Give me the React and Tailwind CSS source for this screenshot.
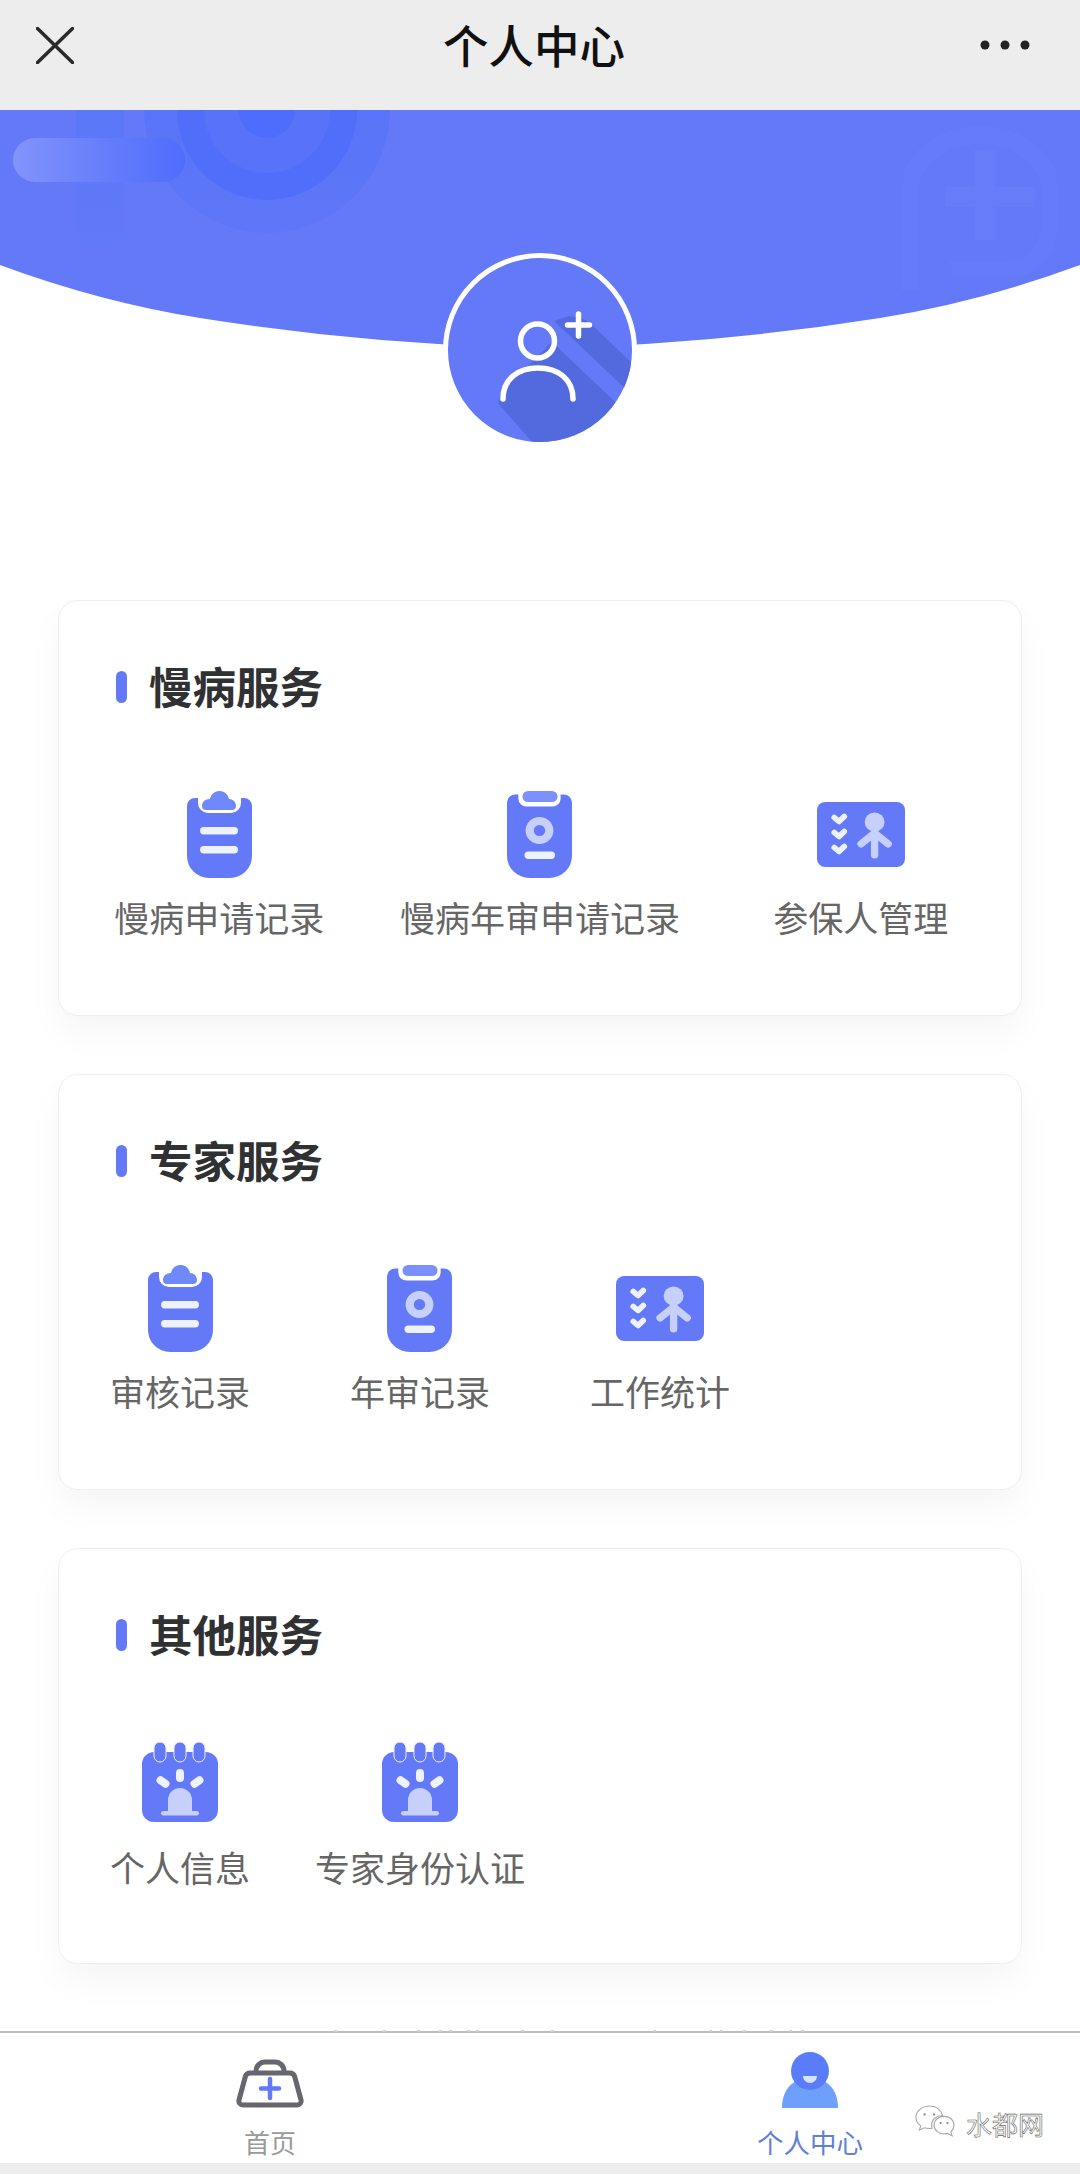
import React from 'react';

const BLUE = '#6479f8';
const PALE = '#c6d0fb';
const LIGHT = '#eef1fe';

// bottoms of the page text that sticks out just above the tab bar line
const CLIPPED_TICKS = [334, 383, 417, 439, 449, 467, 476, 521, 551, 653, 709, 720, 743, 770, 789, 801];

function ClipCloudIcon() {
  return (
    <svg width="65" height="87" viewBox="0 0 65 87">
      <path d="M8 7h3v5a10 10 0 0 0 10 10h23a10 10 0 0 0 10-10V7h3a8 8 0 0 1 8 8v50a22 22 0 0 1-22 22H22A22 22 0 0 1 0 65V15a8 8 0 0 1 8-8z" fill={BLUE} />
      <path d="M19 19a4 4 0 0 1-4-4c0-4 3-7 8-7 1-5 5-8 9.500-8s8.500 3 9.500 8c4 0 7 3 7 7a4 4 0 0 1-4 4z" fill="#6f88fa" />
      <rect x="13" y="36" width="38" height="7.500" rx="3.700" fill={LIGHT} />
      <rect x="13" y="55" width="38" height="7.500" rx="3.700" fill={LIGHT} />
    </svg>
  );
}

function ClipBadgeIcon() {
  return (
    <svg width="66" height="87" viewBox="0 0 64 87" preserveAspectRatio="none">
      <path d="M8 3.500h3v4a8 8 0 0 0 8 8h25a8 8 0 0 0 8-8v-4h3a8 8 0 0 1 8 8V65a22 22 0 0 1-22 22H22A22 22 0 0 1 0 65V11.500a8 8 0 0 1 8-8z" fill={BLUE} />
      <rect x="15" y="0" width="34" height="11" rx="5.500" fill="#7a91fb" />
      <circle cx="31.500" cy="39.500" r="9.500" fill="none" stroke={PALE} strokeWidth="8" />
      <rect x="17" y="60.500" width="29.500" height="7.500" rx="3.700" fill={LIGHT} />
    </svg>
  );
}

function PersonListIcon() {
  return (
    <svg width="88" height="65" viewBox="0 0 84 65" preserveAspectRatio="none">
      <rect width="84" height="65" rx="8" fill={BLUE} />
      <g fill="none" stroke={LIGHT} strokeWidth="5.500" strokeLinecap="round" strokeLinejoin="round">
        <path d="M16.500 15.500l4.500 4 5-5" />
        <path d="M16.500 30.500l4.500 4 5-5" />
        <path d="M16.500 45.500l4.500 4 5-5" />
      </g>
      <circle cx="55" cy="20" r="9.500" fill={PALE} />
      <g fill="none" stroke={PALE} strokeWidth="7" strokeLinecap="round">
        <path d="M55 24v29" />
        <path d="M55 31L42 42" />
        <path d="M55 31l13 11" />
      </g>
    </svg>
  );
}

function AlarmCalendarIcon() {
  return (
    <svg width="76" height="80" viewBox="0 0 76 80">
      <rect y="10" width="76" height="70" rx="12" fill={BLUE} />
      {[18, 38, 57].map(cx => (
        <rect key={cx} x={cx - 6} y="0" width="12" height="20" rx="6" fill={BLUE} stroke="#eef1fe" strokeWidth="1" />
      ))}
      <rect x="34" y="27" width="8" height="13" rx="4" fill={LIGHT} />
      <rect x="17" y="33" width="8" height="14" rx="4" fill={LIGHT} transform="rotate(-55 21 40)" />
      <rect x="51" y="33" width="8" height="14" rx="4" fill={LIGHT} transform="rotate(55 55 40)" />
      <path d="M26 70V58a12 12 0 0 1 24 0v12z" fill={PALE} />
      <rect x="19" y="69" width="38" height="4.500" rx="2.200" fill={PALE} />
    </svg>
  );
}

const sections = [
  {
    title: '慢病服务',
    itemWidth: 'w-[321px]',
    shift: 'ml-0',
    labelGap: 'mt-[15px]',
    items: [
      { icon: <ClipCloudIcon />, label: '慢病申请记录' },
      { icon: <ClipBadgeIcon />, label: '慢病年审申请记录' },
      { icon: <PersonListIcon />, label: '参保人管理' },
    ],
  },
  {
    title: '专家服务',
    itemWidth: 'w-[240px]',
    shift: 'ml-[1px]',
    labelGap: 'mt-[15px]',
    items: [
      { icon: <ClipCloudIcon />, label: '审核记录' },
      { icon: <ClipBadgeIcon />, label: '年审记录' },
      { icon: <PersonListIcon />, label: '工作统计' },
    ],
  },
  {
    title: '其他服务',
    itemWidth: 'w-[240px]',
    shift: 'ml-[1px]',
    labelGap: 'mt-[17px]',
    items: [
      { icon: <AlarmCalendarIcon />, label: '个人信息' },
      { icon: <AlarmCalendarIcon />, label: '专家身份认证' },
    ],
  },
];

function ServiceCard({ section }) {
  return (
    <section className="h-[416px] rounded-[20px] border border-[#efefef] bg-white pt-[63px] shadow-[0_18px_36px_rgba(0,0,0,0.04)]">
      <div className="flex h-[44px] items-center pl-[57px]">
        <span className="mt-[2px] h-[32px] w-[11px] rounded-full bg-[#6479f8]" />
        <h2 className="ml-[22px] text-[43.500px] font-bold leading-[44px] text-[#303133]">{section.title}</h2>
      </div>
      <div className={`mt-[82px] flex ${section.shift}`}>
        {section.items.map(item => (
          <div key={item.label} className={`flex flex-col items-center ${section.itemWidth}`}>
            <div className="flex h-[88px] items-center justify-center">{item.icon}</div>
            <span className={`${section.labelGap} whitespace-nowrap text-[35px] leading-[48px] text-[#666666]`}>{item.label}</span>
          </div>
        ))}
      </div>
    </section>
  );
}

function Hero() {
  return (
    <div className="relative h-[490px] bg-white">
      <svg className="absolute left-0 top-0" width="1080" height="260" viewBox="0 110 1080 260">
        <defs>
          <clipPath id="heroClip">
            <path d="M0 265Q100 302 200 318Q370 345 540 348Q710 345 880 318Q980 302 1080 265V110H0z" />
          </clipPath>
          <linearGradient id="barGrad" x1="0" x2="1" y1="0" y2="0">
            <stop offset="0" stopColor="#8293fb" />
            <stop offset="0.5" stopColor="#677ffb" />
            <stop offset="1" stopColor="#4f6dfd" />
          </linearGradient>
          <linearGradient id="stemGrad" x1="0" x2="0" y1="0" y2="1">
            <stop offset="0" stopColor="#5b78f9" />
            <stop offset="1" stopColor="#6279f8" />
          </linearGradient>
          <linearGradient id="discGrad" x1="0" x2="0" y1="0" y2="1">
            <stop offset="0" stopColor="#5571f9" />
            <stop offset="1" stopColor="#5e77f8" />
          </linearGradient>
        </defs>
        <g clipPath="url(#heroClip)">
          <rect x="0" y="110" width="1080" height="260" fill={BLUE} />
          <circle cx="267" cy="110" r="123" fill="url(#discGrad)" />
          <circle cx="267" cy="110" r="90" fill="#516efb" />
          <circle cx="267" cy="110" r="63" fill="#5873f9" />
          <circle cx="267" cy="110" r="28" fill="#4f6dfc" />
          <rect x="76" y="110" width="48" height="136" fill="url(#stemGrad)" />
          <rect x="13" y="138" width="172" height="44" rx="22" fill="url(#barGrad)" />
          <path d="M910 290V190a70 55 0 0 1 140 0v30q0 50-50 50h-50" fill="none" stroke="#667bf9" strokeWidth="18" />
          <path d="M975 150h20v37h40v20h-40v33h-20v-33h-30v-20h30z" fill="#677cf9" />
        </g>
      </svg>
      <div className="relative flex justify-center pt-[143px]">
        <div className="h-[194px] w-[194px] rounded-full border-[5px] border-white bg-[#6479f8]">
          <svg className="block" width="184" height="184" viewBox="0 0 184 184">
            <defs>
              <clipPath id="avatarClip">
                <circle cx="92" cy="92" r="92" />
              </clipPath>
            </defs>
            <g clipPath="url(#avatarClip)">
              <path d="M141 64l48 46-5 27-78-74 15-5 12 2z" fill="#5369de" />
              <path d="M104 84l80 76-30 24H84L50 145l6-14 26-25 22-22z" fill="#5369de" />
            </g>
            <g fill="none" stroke="#ffffff" strokeWidth="5.500" strokeLinecap="round">
              <circle cx="89.500" cy="83" r="17" />
              <path d="M55 141c0-20 15-31 35-31s35 11 35 31" />
              <path d="M130.500 56v22M119.500 67h22" />
            </g>
          </svg>
        </div>
      </div>
    </div>
  );
}

function TabBar() {
  return (
    <footer className="relative bg-white">
      <svg className="absolute -top-[1px] left-0" width="1080" height="2" viewBox="0 0 1080 2" fill="#d0d0d0">
        {CLIPPED_TICKS.map(x => <rect key={x} x={x} y="0" width="3" height="2" />)}
      </svg>
      <div className="h-[2px] bg-[#bdbdbd]" />
      <div className="flex h-[130px]">
        <div className="flex w-[540px] flex-col items-center pt-[25px]">
          <svg width="68" height="50" viewBox="0 0 68 50">
            <path d="M20 16v-3a9 9 0 0 1 9-9h10a9 9 0 0 1 9 9v3" fill="none" stroke="#66666e" strokeWidth="5" />
            <path d="M14 15h40a5 5 0 0 1 4.500 3l6.500 24a4 4 0 0 1-4 5H7a4 4 0 0 1-4-5l6.500-24a5 5 0 0 1 4.500-3z" fill="#ffffff" stroke="#66666e" strokeWidth="5" strokeLinejoin="round" />
            <path d="M34 21v19M25 30.500h18" fill="none" stroke="#6479f8" strokeWidth="4.500" strokeLinecap="round" />
          </svg>
          <span className="mt-[16px] text-[26px] leading-[36px] text-[#999999]">首页</span>
        </div>
        <div className="flex w-[540px] flex-col items-center pt-[19px]">
          <svg width="58" height="56" viewBox="0 0 58 56">
            <path d="M1 56c0-20 12-30 28-30s28 10 28 30z" fill="#6ea0fb" />
            <circle cx="29" cy="19" r="19" fill="#5b7cf9" />
            <path d="M22 24h14a7 7 0 0 1-14 0z" fill="#d5e4fd" />
          </svg>
          <span className="mt-[16px] text-[26.500px] leading-[36px] text-[#5f80d8]">个人中心</span>
        </div>
      </div>
      <div className="absolute left-[914px] top-[74px] flex items-center gap-[10px]">
        <svg width="42" height="38" viewBox="0 0 42 40" fill="#ffffff" stroke="#a8a8a8" strokeWidth="1.200">
          <path d="M15 1C7 1 1 6.500 1 13c0 4 2 7 5 9l-1.500 4.500 5-2.500c1.500.5 3 .7 5.500.7 1 0 2 0 3-.2-.5-1.500-.5-2.500-.5-3.500 0-6 5.500-10 11.500-10C27 5 22 1 15 1z" />
          <path d="M41 21c0-5.500-5-9-10.500-9S20 15.500 20 21s5 9.500 10.500 9.500c1.500 0 2.500-.2 4-.6l4.500 2.600-1.300-4C40 26 41 24 41 21z" />
          <circle cx="10" cy="10" r="1.200" fill="#888888" stroke="none" />
          <circle cx="20" cy="10" r="1.200" fill="#888888" stroke="none" />
          <circle cx="27" cy="19" r="1.200" fill="#888888" stroke="none" />
          <circle cx="34" cy="19" r="1.200" fill="#888888" stroke="none" />
        </svg>
        <span className="text-[26px] font-normal leading-[36px] text-white [-webkit-text-stroke:0.6px_#666666]">水都网</span>
      </div>
    </footer>
  );
}

export default function App() {
  return (
    <div className="flex h-[2174px] w-[1080px] flex-col overflow-hidden bg-white font-['Noto_Sans_CJK_SC','Noto_Sans',sans-serif]">
      <header className="flex h-[110px] shrink-0 items-start justify-between bg-[#ededed] px-[36px] pt-[27px]">
        <svg width="38" height="37" viewBox="0 0 38 37" fill="none" stroke="#2a2a2a" strokeWidth="3.500" strokeLinecap="round">
          <path d="M1.500 1.500l35 34M36.500 1.500l-35 34" />
        </svg>
        <h1 className="ml-[14px] -mt-[6px] text-[45.500px] font-medium leading-[46px] text-[#111111]">个人中心</h1>
        <svg className="mt-[13px] mr-[14px]" width="50" height="10" viewBox="0 0 50 10" fill="#222222">
          <circle cx="5" cy="5" r="4.500" />
          <circle cx="25" cy="5" r="4.500" />
          <circle cx="45" cy="5" r="4.500" />
        </svg>
      </header>

      <Hero />

      <main className="flex h-[1431px] shrink-0 flex-col gap-[58px] px-[58px]">
        {sections.map(section => <ServiceCard key={section.title} section={section} />)}
      </main>

      <TabBar />
      <div className="flex-1 bg-[#ededed]" />
    </div>
  );
}
